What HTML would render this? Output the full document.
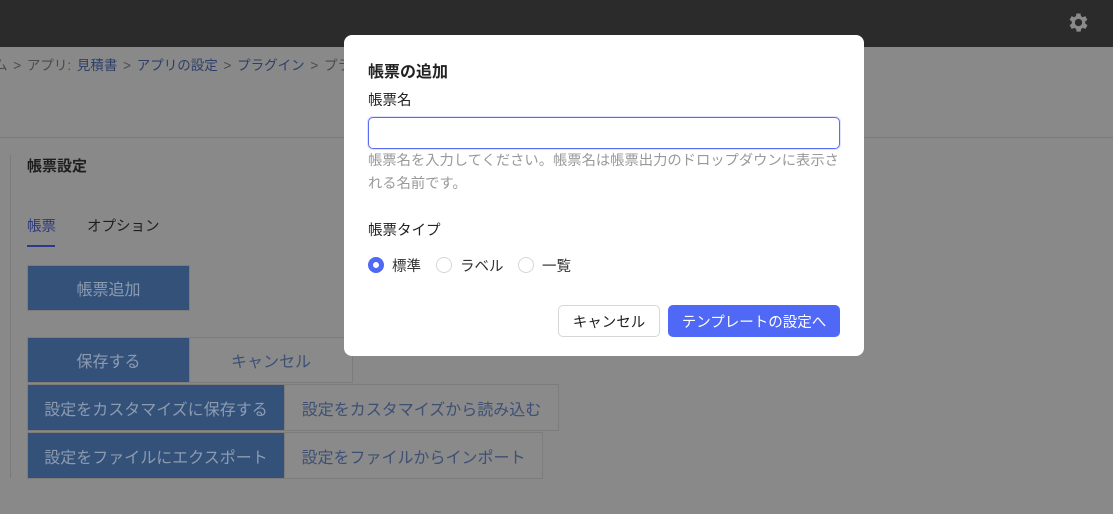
<!DOCTYPE html>
<html><head><meta charset="utf-8"><style>
*{box-sizing:border-box;margin:0;padding:0}
body{width:1113px;height:514px;overflow:hidden;background:#898989;font-family:"Liberation Sans","Noto Sans CJK JP",sans-serif;position:relative;color:#1a1a1a}
.top{position:absolute;left:0;top:0;width:1113px;height:47px;background:#2b2b2b}
.abs{position:absolute;white-space:nowrap}
.bc{top:54px;left:-6px;font-size:13.5px;color:#4a4a4a;word-spacing:2px}
.bc b{font-weight:normal;color:#2d3f68}
.btn{position:absolute;display:flex;align-items:center;justify-content:center;font-size:16px;border:1px solid #7c7c7c}
.bl{background:#34517a;color:#8d9bb0}
.gr{background:#8a8a8a;color:#3d5074}
.modal{position:absolute;left:344px;top:35px;width:520px;height:321px;background:#fff;border-radius:8px}
.radio{position:absolute;width:16px;height:16px;border-radius:50%;border:1px solid #d6d6d6;top:222px}
</style></head><body>
<div class="top"></div>
<svg class="abs" style="left:1066px;top:10px" width="25" height="25" viewBox="0 0 24 24"><path fill="#8a8a8a" d="M19.4 13a7.5 7.5 0 0 0 0-2l2.1-1.6-2-3.5-2.5 1a7.3 7.3 0 0 0-1.7-1L15 3.3h-4l-.4 2.6a7.3 7.3 0 0 0-1.7 1l-2.5-1-2 3.5L6.6 11a7.5 7.5 0 0 0 0 2l-2.1 1.6 2 3.5 2.5-1a7.3 7.3 0 0 0 1.7 1l.4 2.6h4l.4-2.6a7.3 7.3 0 0 0 1.7-1l2.5 1 2-3.5zM13 15.5a3.5 3.5 0 1 1 0-7 3.5 3.5 0 0 1 0 7z" transform="translate(-1 0)"/></svg>
<div class="abs bc">ム &gt; アプリ: <b>見積書</b> &gt; <b>アプリの設定</b> &gt; <b>プラグイン</b> &gt; プラ</div>
<div class="abs" style="left:0;top:137px;width:1113px;height:1px;background:#7a7a7a"></div>
<div class="abs" style="left:10px;top:155px;width:1px;height:323px;background:#7a7a7a"></div>
<div class="abs" style="left:27px;top:155px;font-size:15px;font-weight:bold;color:#1e1e1e">帳票設定</div>
<div class="abs" style="left:27px;top:215px;font-size:14.5px;color:#2d3a7a">帳票</div>
<div class="abs" style="left:27px;top:245px;width:28px;height:2px;background:#2d3a8a"></div>
<div class="abs" style="left:87px;top:215px;font-size:14.5px;color:#1e1e1e">オプション</div>
<div class="btn bl" style="left:27px;top:265px;width:163px;height:46px">帳票追加</div>
<div class="btn bl" style="left:27px;top:337px;width:163px;height:46px">保存する</div>
<div class="btn gr" style="left:189px;top:337px;width:164px;height:46px">キャンセル</div>
<div class="btn bl" style="left:27px;top:384px;width:258px;height:47px">設定をカスタマイズに保存する</div>
<div class="btn gr" style="left:284px;top:384px;width:275px;height:47px">設定をカスタマイズから読み込む</div>
<div class="btn bl" style="left:27px;top:432px;width:258px;height:47px">設定をファイルにエクスポート</div>
<div class="btn gr" style="left:284px;top:432px;width:259px;height:47px">設定をファイルからインポート</div>
<div class="modal">
<div class="abs" style="left:24px;top:23px;font-size:16px;font-weight:bold;color:#222">帳票の追加</div>
<div class="abs" style="left:24px;top:54px;font-size:14.5px;color:#222">帳票名</div>
<div class="abs" style="left:24px;top:82px;width:472px;height:32px;border:1px solid #5a6cf0;border-radius:5px;box-shadow:0 0 0 1px #dfe3ff"></div>
<div class="abs" style="left:24px;top:115px;font-size:14.3px;line-height:23px;color:#999;white-space:normal;width:475px">帳票名を入力してください。帳票名は帳票出力のドロップダウンに表示される名前です。</div>
<div class="abs" style="left:24px;top:184px;font-size:14.5px;color:#222">帳票タイプ</div>
<div class="radio" style="left:24px;border:5px solid #4f68f5"></div>
<div class="abs" style="left:48px;top:220px;font-size:14.5px;color:#333">標準</div>
<div class="radio" style="left:92px"></div>
<div class="abs" style="left:116px;top:220px;font-size:14.5px;color:#333">ラベル</div>
<div class="radio" style="left:174px"></div>
<div class="abs" style="left:198px;top:220px;font-size:14.5px;color:#333">一覧</div>
<div class="btn" style="left:214px;top:270px;width:102px;height:32px;border:1px solid #d6d6d6;border-radius:5px;background:#fff;color:#222;font-size:14.5px">キャンセル</div>
<div class="btn" style="left:324px;top:270px;width:172px;height:32px;border:none;border-radius:5px;background:#4f68f5;color:#fff;font-size:14.5px">テンプレートの設定へ</div>
</div>
</body></html>
